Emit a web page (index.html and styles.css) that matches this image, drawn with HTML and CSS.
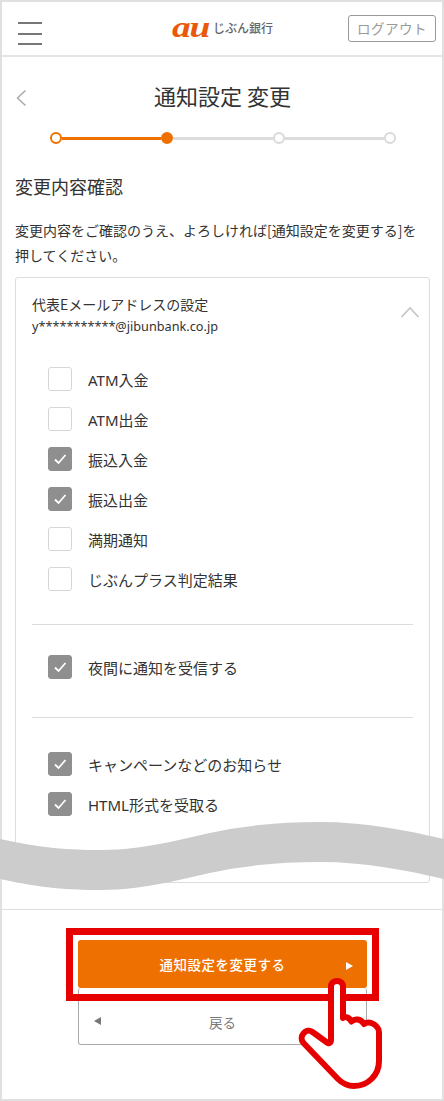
FILE: index.html
```html
<!DOCTYPE html>
<html lang="ja">
<head>
<meta charset="utf-8">
<title>通知設定 変更</title>
<link rel="stylesheet" href="styles.css">
</head>
<body>
<div class="frame">
  <header class="header">
    <div class="burger"><span></span><span></span><span></span></div>
    <div class="logo"><span class="logo-au">au</span><span class="logo-name">じぶん銀行</span></div>
    <a class="logout">ログアウト</a>
  </header>
  <main class="main">
    <div class="title-row">
      <svg class="back" width="12" height="20" viewBox="0 0 12 20"><path d="M10.5 2.5 2.5 10l8 7.5" fill="none" stroke="#aaa" stroke-width="1.5"/></svg>
      <h1 class="title">通知設定 変更</h1>
    </div>
    <div class="stepper">
      <span class="step step-done"></span>
      <span class="line line-on"></span>
      <span class="step step-now"></span>
      <span class="line"></span>
      <span class="step"></span>
      <span class="line"></span>
      <span class="step"></span>
    </div>
    <h2 class="heading">変更内容確認</h2>
    <p class="lead">変更内容をご確認のうえ、よろしければ[通知設定を変更する]を押してください。</p>
    <section class="card">
      <div class="card-head">
        <div>
          <div class="card-title">代表Eメールアドレスの設定</div>
          <div class="card-mail">y***********@jibunbank.co.jp</div>
        </div>
        <svg class="chev" width="20" height="12" viewBox="0 0 20 12"><path d="M1.5 11 10 2l8.500 9" fill="none" stroke="#c4c4c4" stroke-width="1.6"/></svg>
      </div>
      <div class="group">
        <div class="row"><span class="box"></span><span class="label">ATM入金</span></div>
        <div class="row"><span class="box"></span><span class="label">ATM出金</span></div>
        <div class="row"><span class="box on"><svg width="14" height="12" viewBox="0 0 14 12"><path d="M2 6.500 5.500 10 12.500 2" fill="none" stroke="#fff" stroke-width="1.800"/></svg></span><span class="label">振込入金</span></div>
        <div class="row"><span class="box on"><svg width="14" height="12" viewBox="0 0 14 12"><path d="M2 6.500 5.500 10 12.500 2" fill="none" stroke="#fff" stroke-width="1.800"/></svg></span><span class="label">振込出金</span></div>
        <div class="row"><span class="box"></span><span class="label">満期通知</span></div>
        <div class="row"><span class="box"></span><span class="label">じぶんプラス判定結果</span></div>
      </div>
      <hr class="sep sep-a">
      <div class="group group-b">
        <div class="row"><span class="box on"><svg width="14" height="12" viewBox="0 0 14 12"><path d="M2 6.500 5.500 10 12.500 2" fill="none" stroke="#fff" stroke-width="1.800"/></svg></span><span class="label">夜間に通知を受信する</span></div>
      </div>
      <hr class="sep sep-b">
      <div class="group group-c">
        <div class="row"><span class="box on"><svg width="14" height="12" viewBox="0 0 14 12"><path d="M2 6.500 5.500 10 12.500 2" fill="none" stroke="#fff" stroke-width="1.800"/></svg></span><span class="label">キャンペーンなどのお知らせ</span></div>
        <div class="row"><span class="box on"><svg width="14" height="12" viewBox="0 0 14 12"><path d="M2 6.500 5.500 10 12.500 2" fill="none" stroke="#fff" stroke-width="1.800"/></svg></span><span class="label">HTML形式を受取る</span></div>
      </div>
    </section>
  </main>
  <footer class="footer">
    <a class="btn btn-primary"><span>通知設定を変更する</span><i class="tri tri-r"></i></a>
    <a class="btn btn-back"><i class="tri tri-l"></i><span>戻る</span></a>
  </footer>

  <svg class="wave" width="444" height="72" viewBox="0 0 444 72"><path d="M0 17C40 26 70 28 100 28 150 28 190 14 230 7 260 2 290 0 320 0 365 0 405 8 444 17V57C405 48 365 40 320 40 290 40 260 42 230 47 190 54 150 68 100 68 70 68 40 66 0 57Z" fill="#ccc"/></svg>
  <div class="callout"></div>
  <svg class="hand" width="90" height="112" viewBox="0 0 90 112"><path d="M33 16V9.500C33 2 45 2 45 9.500V41C47 39 51 40 53.500 44.500 57 41 63 42 66 47 70 44 76 46 79 50 80 51 81 53 81 55V84C81 98 70 109 56 109 49 109 44 106 40 102L5.500 66C0 60 8 50 14.500 55L29 65.500C31 67 33 66 33 63Z" fill="#fff" stroke="#e60000" stroke-width="6" stroke-linejoin="round"/></svg>
</div>
</body>
</html>
```
FILE: styles.css
```css
* { box-sizing: border-box; }
html, body { margin: 0; padding: 0; }
html { overflow: hidden; }
body { font-family: "Noto Sans", "Noto Sans CJK JP", sans-serif; color: #333; background: #fff; }
.frame { position: relative; width: 444px; height: 1101px; border: 2px solid #e0e0e0; display: flex; flex-direction: column; background: #fff; }
.header { position: relative; height: 55px; flex: none; border-bottom: 2px solid #e4e4e4; display: flex; align-items: center; justify-content: space-between; padding: 0 6px 0 16px; }
.burger { width: 24px; height: 23px; display: flex; flex-direction: column; justify-content: space-between; margin-top: 10px; }
.burger span { display: block; height: 2px; background: #777; }
.logo { position: absolute; left: 170px; top: 12px; display: flex; align-items: center; height: 26px; }
.logo-au { font-family: "Liberation Serif", serif; font-style: italic; font-weight: 700; font-size: 30px; line-height: 26px; letter-spacing: -1px; color: #e8590c; width: 37px; display: inline-block; transform: scaleX(1.25); transform-origin: left center; }
.logo-name { font-family: "Noto Sans CJK JP", sans-serif; font-size: 12px; font-weight: 500; color: #666; margin-left: 4px; white-space: nowrap; }
.logout { width: 88px; height: 27px; border: 1px solid #999; border-radius: 3px; font-size: 13.500px; line-height: 25px; text-align: center; color: #999; letter-spacing: 0.500px; font-family: "Noto Sans CJK JP", sans-serif; }
.main { flex: 1; padding: 0 12px 0 13px; min-height: 0; }
.title-row { position: relative; height: 56px; padding-top: 19px; }
.back { position: absolute; left: 0; top: 31px; }
.title { margin: 0; font-size: 22px; line-height: 38px; font-weight: 400; text-align: center; color: #333; font-family: "Noto Sans CJK JP", sans-serif; }
.stepper { display: flex; align-items: center; height: 14px; padding: 0 34px 0 35px; margin-top: 18px; }
.step { flex: none; width: 12px; height: 12px; border-radius: 50%; background: #fff; border: 2px solid #d9d9d9; }
.step-done { border-color: #ee7000; }
.step-now { border-color: #ee7000; background: #ee7000; }
.line { flex: 1; height: 3px; background: #dcdcdc; }
.line-on { background: #ee7000; }
.heading { margin: 29px 0 0; font-size: 18px; line-height: 24px; font-weight: 400; color: #333; font-family: "Noto Sans CJK JP", sans-serif; }
.lead { margin: 20px 0 0; font-size: 14px; line-height: 25px; color: #333; font-family: "Noto Sans CJK JP", sans-serif; }
.card { margin-top: 9px; height: 606px; border: 1px solid #ddd; border-radius: 3px; padding: 0 16px; }
.card-head { display: flex; justify-content: space-between; align-items: flex-start; padding-top: 15px; height: 89px; }
.card-title { font-size: 14px; line-height: 22px; font-family: "Noto Sans CJK JP", sans-serif; }
.card-mail { font-size: 12.700px; line-height: 22px; }
.chev { margin-right: -7px; margin-top: 13px; }
.group { padding-left: 16px; }
.group > .row + .row { margin-top: 16px; }
.row { display: flex; align-items: center; height: 24px; }
.box { flex: none; width: 24px; height: 24px; border: 1px solid #d6d6d6; border-radius: 3px; background: #fff; display: flex; align-items: center; justify-content: center; }
.box.on { background: #8f8f8f; border-color: #8f8f8f; }
.label { margin-left: 16px; font-size: 15px; font-family: "Noto Sans", "Noto Sans CJK JP", sans-serif; color: #333; }
.sep { border: 0; height: 1px; background: #dcdcdc; margin: 0; }
.sep-a { margin-top: 33px; }
.group-b { margin-top: 30px; }
.sep-b { margin-top: 38px; }
.group-c { margin-top: 34px; }
.footer { height: 190px; flex: none; border-top: 1px solid #ddd; display: flex; flex-direction: column; align-items: flex-start; padding: 30px 0 0 76px; }
.btn { width: 289px; position: relative; display: flex; align-items: center; justify-content: center; font-family: "Noto Sans CJK JP", sans-serif; font-size: 13.500px; border-radius: 3px; }
.btn-primary { height: 48px; background: #ee7000; color: #fff; font-weight: 500; letter-spacing: 0.500px; }
.btn-back { height: 57px; border: 1px solid #aaa; border-top: 0; color: #777; padding-top: 12px; }
.tri { position: absolute; width: 0; height: 0; border-style: solid; }
.tri-r { right: 14px; top: 22px; border-width: 4px 0 4px 7px; border-color: transparent transparent transparent #fff; }
.tri-l { left: 15px; top: 29px; border-width: 4px 7px 4px 0; border-color: transparent #777 transparent transparent; }
.wave { position: absolute; left: -2px; top: 820px; }
.callout { position: absolute; left: 64px; top: 926px; width: 313px; height: 73px; border: 7px solid #e60000; }
.hand { position: absolute; left: 296px; top: 975px; }
```
